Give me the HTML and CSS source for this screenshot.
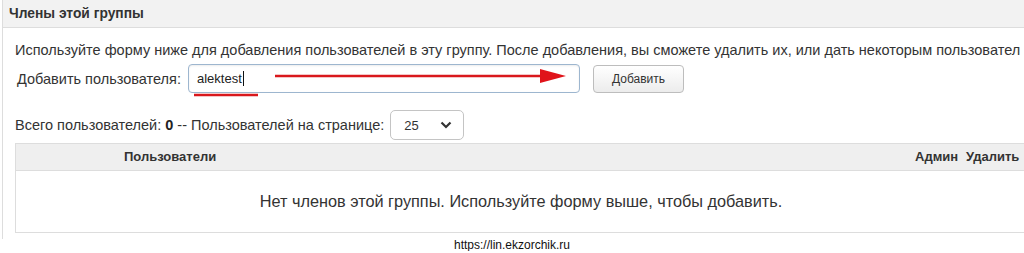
FILE: index.html
```html
<!doctype html>
<html lang="ru">
<head>
    <meta charset="utf-8">
    <title>Члены этой группы</title>
    <link rel="stylesheet" href="styles.css">
</head>
<body>

    <div class="panel">
        <div class="panel-title">Члены этой группы</div>

        <div class="panel-body">
            <p class="intro">Используйте форму ниже для добавления пользователей в эту группу. После добавления, вы сможете удалить их, или дать некоторым пользовател</p>

            <div class="add-row">
                <label class="add-label" for="user">Добавить пользователя:</label>
                <div class="field">
                    <div class="input" id="user">alektest<span class="caret"></span></div>
                    <!-- red marks drawn over the screenshot -->
                    <svg class="marks" width="400" height="40" viewBox="0 0 400 40">
                        <line x1="6" y1="31" x2="70" y2="31" stroke="#d9181c" stroke-width="2.5"/>
                        <line x1="87" y1="12" x2="360" y2="12" stroke="#d9181c" stroke-width="2.5"/>
                        <polygon points="352,5 378,12 352,19" fill="#e0141a"/>
                    </svg>
                </div>
                <button class="btn">Добавить</button>
            </div>

            <div class="count-row">
                <span class="count-text">Всего пользователей: <b>0</b> -- Пользователей на странице:</span>
                <div class="select">
                    <span>25</span>
                    <svg width="12" height="8" viewBox="0 0 12 8">
                        <polyline points="1.5,1.5 6,6 10.5,1.5" fill="none" stroke="#333" stroke-width="2.2"/>
                    </svg>
                </div>
            </div>

            <div class="members">
                <div class="members-head">
                    <div class="col-user">Пользователи</div>
                    <div class="col-admin">Админ</div>
                    <div class="col-del">Удалить</div>
                </div>
                <div class="members-empty">Нет членов этой группы. Используйте форму выше, чтобы добавить.</div>
            </div>
        </div>
    </div>

    <div class="footer">https://lin.ekzorchik.ru</div>

</body>
</html>
```

FILE: styles.css
```css
html {
    width: 100%;
    height: 100%;
}

body {
    margin: 0;
    font-family: 'Liberation Sans', Arial, sans-serif;
    font-size: 14.5px;
    color: #333;
    background-color: #fff;
    overflow: hidden;
}

.panel {
    margin-left: 2px;
    width: 1100px;
    height: 239px;
    border-left: 1px solid #ddd;
    box-sizing: border-box;
}

.panel-title {
    height: 27px;
    line-height: 27px;
    padding-left: 6px;
    font-size: 13.8px;
    font-weight: bold;
    color: #333;
    background-color: #f2f2f2;
    border-bottom: 1px solid #ddd;
}

.panel-body {
    padding: 14px 0 0 12px;
}

.intro {
    margin: 0;
    line-height: 17px;
    white-space: nowrap;
}

.add-row {
    display: flex;
    align-items: center;
    margin-top: 5px;
    height: 29px;
}

.add-label {
    padding-left: 2px;
    width: 171px;
}

.field {
    position: relative;
}

.input {
    width: 392px;
    height: 29px;
    box-sizing: border-box;
    padding-left: 8px;
    line-height: 27px;
    font-size: 13px;
    color: #222;
    border: 1px solid #9db6cf;
    border-radius: 4px;
    box-shadow: inset 0 1px 2px rgba(0, 0, 0, 0.08);
}

.caret {
    display: inline-block;
    width: 1px;
    height: 15px;
    margin-left: 1px;
    vertical-align: -3px;
    background-color: #111;
}

.marks {
    position: absolute;
    left: 0;
    top: 0;
}

.btn {
    margin-left: 13px;
    width: 91px;
    height: 28px;
    font-family: inherit;
    font-size: 12px;
    color: #333;
    background: linear-gradient(#fff, #ececec);
    border: 1px solid #bdbdbd;
    border-radius: 4px;
}

.count-row {
    display: flex;
    align-items: center;
    gap: 6px;
    margin-top: 17px;
    height: 30px;
}

.count-text {
    white-space: nowrap;
}

.count-text b {
    color: #222;
}

.select {
    display: flex;
    align-items: center;
    justify-content: space-between;
    width: 74px;
    height: 30px;
    box-sizing: border-box;
    padding: 0 11px 0 13px;
    font-size: 13px;
    border: 1px solid #c4c4c4;
    border-radius: 5px;
}

.members {
    margin-top: 3px;
    border: 1px solid #ddd;
    border-right: 0;
}

.members-head {
    display: flex;
    height: 26px;
    line-height: 26px;
    font-size: 13px;
    font-weight: bold;
    color: #333;
    background-color: #efefef;
    border-bottom: 1px solid #ddd;
}

.col-user {
    padding-left: 108px;
    width: 791px;
}

.col-admin {
    width: 51px;
}

.col-del {
    width: 70px;
}

.members-empty {
    height: 61px;
    line-height: 61px;
    text-align: center;
    font-size: 16.3px;
    color: #333;
    width: 1010px;
}

.footer {
    text-align: center;
    font-size: 12px;
    color: #111;
    line-height: 12px;
}
```
